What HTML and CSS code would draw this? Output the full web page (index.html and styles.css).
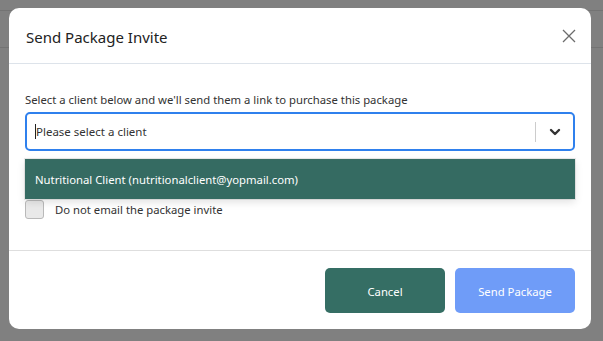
FILE: index.html
```html
<!DOCTYPE html>
<html>
<head>
<meta charset="utf-8">
<link rel="stylesheet" href="styles.css">
</head>
<body>
<div class="backdrop">
  <div class="modal">
    <div class="modal-header">
      <h2 class="modal-title">Send Package Invite</h2>
      <svg class="close" width="14" height="14" viewBox="0 0 14 14"><path d="M1 1L13 13M13 1L1 13" stroke="#6c6c6c" stroke-width="1.3" fill="none"/></svg>
    </div>
    <div class="modal-body">
      <p class="label">Select a client below and we'll send them a link to purchase this package</p>
      <div class="select-wrap">
        <div class="select">
          <div class="value"><span class="caret"></span>Please select a client</div>
          <div class="indicators">
            <span class="sep"></span>
            <svg class="chev" width="14" height="10" viewBox="0 0 14 10"><path d="M3 3L7 7L11 3" stroke="#333" stroke-width="2.4" fill="none" stroke-linecap="round" stroke-linejoin="round"/></svg>
          </div>
        </div>
        <div class="menu">
          <div class="option">Nutritional Client (nutritionalclient@yopmail.com)</div>
        </div>
      </div>
      <label class="check">
        <span class="box"></span>
        <span>Do not email the package invite</span>
      </label>
    </div>
    <div class="modal-footer">
      <button class="btn btn-cancel">Cancel</button>
      <button class="btn btn-send">Send Package</button>
    </div>
  </div>
</div>
</body>
</html>
```
FILE: styles.css
```css
html, body {
  margin: 0;
  padding: 0;
}
body {
  width: 603px;
  height: 341px;
  overflow: hidden;
  background: #808080;
  font-family: "Noto Sans", "Open Sans", sans-serif;
  color: #212529;
}
.backdrop {
  padding: 8px 12px 0 9px;
  background:
    linear-gradient(#737373, #737373) 0 10px / 100% 1px no-repeat,
    linear-gradient(#737373, #737373) 0 47px / 100% 1px no-repeat,
    #808080;
  height: 341px;
  box-sizing: border-box;
}
.modal {
  width: 582px;
  height: 321px;
  background: #fff;
  border-radius: 10px;
  display: flex;
  flex-direction: column;
  box-sizing: border-box;
}
.modal-header {
  height: 56px;
  box-sizing: border-box;
  border-bottom: 1px solid #dde3ea;
  display: flex;
  align-items: center;
  justify-content: space-between;
  padding: 0 15px 0 17px;
}
.modal-title {
  margin: 0;
  font-size: 15px;
  font-weight: 400;
  color: #222;
  position: relative;
  top: 1px;
}
.modal-body {
  padding: 0 16px;
  height: 187px;
  box-sizing: border-box;
  border-bottom: 1px solid #dedede;
}
.label {
  margin: 0;
  padding-top: 28px;
  font-size: 11.3px;
  line-height: 16px;
  color: #333;
}
.select-wrap {
  position: relative;
  margin-top: 4px;
}
.select {
  height: 39px;
  box-sizing: border-box;
  border: 2px solid #2f80ed;
  border-radius: 5px;
  display: flex;
  align-items: center;
  justify-content: space-between;
}
.value {
  font-size: 11.5px;
  color: #333;
  padding-left: 8px;
  display: flex;
  align-items: center;
}
.caret {
  display: inline-block;
  width: 1px;
  height: 15px;
  background: #222;
}
.indicators {
  display: flex;
  align-items: center;
  height: 100%;
}
.sep {
  width: 1px;
  height: 20px;
  background: #ccc;
}
.chev {
  margin: 0 11px 0 12px;
}
.menu {
  position: absolute;
  left: 0;
  right: 0;
  top: 47px;
  background: #356b62;
  box-shadow: 0 0 0 1px rgba(0,0,0,0.08), 0 3px 8px rgba(0,0,0,0.12);
  z-index: 2;
}
.option {
  height: 40px;
  display: flex;
  align-items: center;
  padding-left: 10px;
  font-size: 11.3px;
  color: #fff;
}
.check {
  display: flex;
  align-items: center;
  gap: 11px;
  margin-top: 49px;
  font-size: 11.3px;
  color: #333;
}
.box {
  width: 19px;
  height: 19px;
  box-sizing: border-box;
  border: 1px solid #b9b9b9;
  border-radius: 3px;
  background: #e9e9e9;
}
.modal-footer {
  flex: 1;
  display: flex;
  justify-content: flex-end;
  gap: 10px;
  padding: 17px 16px 0 0;
  box-sizing: border-box;
}
.btn {
  width: 120px;
  height: 45px;
  border: none;
  border-radius: 5px;
  color: #fff;
  font-family: "Noto Sans", "Open Sans", sans-serif;
  font-size: 11.3px;
  padding-top: 2px;
}
.btn-cancel {
  background: #356e64;
}
.btn-send {
  background: #6f9cf8;
}
```
